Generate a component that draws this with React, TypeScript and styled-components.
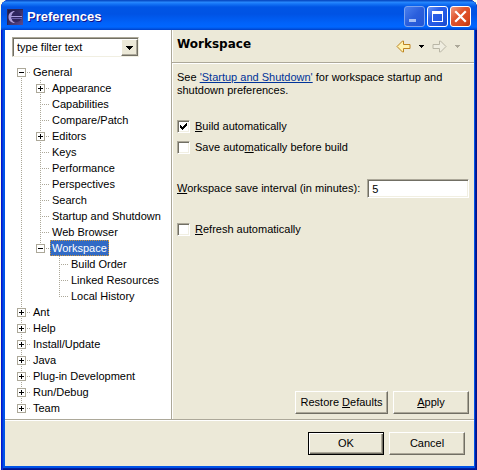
import React, { useState } from "react";
import styled, { createGlobalStyle, css } from "styled-components";

const face = "#ece9d8";
const shade = "#aca899";

const GlobalStyle = createGlobalStyle`
  * { box-sizing: border-box; }
  body { margin: 0; background: #fffde8; }
  body, button, input { font: 11px/13px "Liberation Sans", Tahoma, sans-serif; color: #000; }
`;

const Window = styled.div`
  display: flex;
  flex-direction: column;
  min-height: 100vh;
  padding: 0 3px 4px 4px;
  margin-left: 1px;
  border-radius: 8px 8px 0 0;
  background: #0054e8;
  box-shadow: inset 1px 0 #0019cf, inset 2px 0 #0831d9, inset -1px 0 #00138c, inset -2px 0 #001ea0,
    inset 0 -1px #00138c, inset 0 -2px #001ea0;
`;

const TitleBar = styled.header`
  display: flex;
  align-items: center;
  gap: 4px;
  height: 30px;
  margin: 0 -3px 0 -4px;
  padding: 3px 6px 0 6px;
  border-radius: 8px 8px 0 0;
  background: linear-gradient(
    #0a4fc8 0, #0a4fc8 1px, #2a8bff 2px, #1473f5 4px, #0055e5 7px, #0053e4 14px, #0062fa 23px, #0066ff 27px, #0050dc 29px, #003dc8 30px
  );
`;

const Title = styled.h1`
  flex: 1;
  margin: 0;
  font: bold 13px/16px "Liberation Sans", "Trebuchet MS", sans-serif;
  color: #fff;
  text-shadow: 1px 1px #0f1089;
`;

const Captions = styled.div`
  display: flex;
  gap: 2px;
`;

const CaptionButton = styled.button<{ $kind: "dim" | "blue" | "red" }>`
  width: 21px;
  height: 21px;
  padding: 0;
  border: 1px solid #fff;
  border-radius: 3px;
  background: linear-gradient(135deg, #6a95f5, #2b5fe8 35%, #2257e2 70%, #1a48c8);
  svg { display: block; }
  ${(p) => p.$kind === "dim" && css`
    border-color: #7ba2ee;
    background: linear-gradient(135deg, #4a80ee, #2a5edc 50%, #2456d4);
  `}
  ${(p) => p.$kind === "red" && css`
    background: linear-gradient(135deg, #f09a80, #e0552e 40%, #d9481f 75%, #b8330f);
  `}
`;

const Body = styled.main`
  display: grid;
  grid-template-columns: 166px minmax(0, 1fr);
  flex: 1;
  background: ${face};
`;

const Sidebar = styled.nav`
  padding: 7px 0 3px 7px;
  background: #fff;
`;

const Filter = styled.div`
  display: flex;
  width: 127px;
  height: 20px;
  margin-bottom: 7px;
  border: 1px solid;
  border-color: ${shade} #f1efe2 #f1efe2 ${shade};
  box-shadow: inset 1px 1px #716f64;
`;

const FilterInput = styled.input`
  flex: 1;
  min-width: 0;
  padding: 1px 4px 0;
  border: 0;
  background: none;
  outline: 0;
`;

const bevel = css`
  border: 1px solid;
  border-color: #fff #716f64 #716f64 #fff;
  box-shadow: inset -1px -1px ${shade};
  background: ${face};
`;

const DropButton = styled.button`
  ${bevel}
  display: grid;
  place-items: center;
  width: 17px;
  margin: 1px 0 0;
  padding: 0;
`;

const Tree = styled.ul`
  margin: 0;
  padding: 0;
  list-style: none;
`;

const Row = styled.div`
  display: flex;
  height: 16px;
`;

const vDots = `repeating-linear-gradient(${shade} 0 1px, transparent 1px 2px)`;
const hDots = `repeating-linear-gradient(90deg, ${shade} 0 1px, transparent 1px 2px)`;

type Rail = "none" | "full" | "up" | "down";
const railBox = {
  none: "0 0 / 0 0",
  full: "9px 0 / 1px 16px",
  up: "9px 0 / 1px 9px",
  down: "9px 8px / 1px 8px",
};

const Guide = styled.span<{ $rail: Rail; $stub?: boolean }>`
  display: grid;
  flex: none;
  align-items: center;
  width: 19px;
  padding-left: 5px;
  background: ${vDots} ${(p) => railBox[p.$rail]} no-repeat
    ${(p) => p.$stub && css`, ${hDots} 9px 8px / 9px 1px no-repeat`};
`;

const Expander = styled.button`
  display: block;
  width: 9px;
  height: 9px;
  padding: 0;
  border: 1px solid ${shade};
  background: #fff;
  svg { display: block; }
`;

const NodeLabel = styled.button<{ $selected: boolean }>`
  padding: 0 2px;
  border: 0;
  background: none;
  line-height: 16px;
  white-space: nowrap;
  ${(p) => p.$selected && css`
    background: #316ac5;
    color: #fff;
    outline: 1px dotted #ce953a;
    outline-offset: -1px;
  `}
`;

const Page = styled.section`
  display: flex;
  flex-direction: column;
  border-left: 1px solid ${shade};
  box-shadow: inset 1px 0 #fff;
`;

const PageHeader = styled.header`
  display: flex;
  align-items: center;
  justify-content: space-between;
  height: 33px;
  padding: 0 14px 5px 5px;
  border-bottom: 1px solid ${shade};
`;

const PageTitle = styled.h2`
  margin: 0;
  font: bold 12px/16px "DejaVu Sans", Verdana, sans-serif;
`;

const History = styled.div`
  display: flex;
  align-items: center;
  gap: 8px;
  padding-top: 5px;
`;

const FlatButton = styled.button`
  display: grid;
  padding: 0;
  border: 0;
  background: none;
`;

const Form = styled.form`
  display: flex;
  flex-direction: column;
  flex: 1;
  gap: 8px;
  padding: 7px 5px 5px 5px;
  border-top: 1px solid #fff;
`;

const Intro = styled.p`
  margin: 0 0 15px;
  a { color: #003399; }
`;

const Check = styled.label`
  display: flex;
  align-items: center;
  gap: 5px;
  height: 13px;
`;

const CheckBox = styled.input`
  appearance: none;
  width: 13px;
  height: 13px;
  margin: 0;
  border: 1px solid;
  border-color: ${shade} #fff #fff ${shade};
  background: #fff;
  box-shadow: inset 1px 1px #716f64, inset -1px -1px #f1efe2;
  & + svg {
    width: 7px;
    margin: 0 3px 0 -15px;
    visibility: hidden;
  }
  &:checked + svg { visibility: visible; }
`;

const Interval = styled.div`
  display: flex;
  align-items: center;
  gap: 7px;
  margin: 17px 0;
  label { white-space: nowrap; }
`;

const TextBox = styled.input`
  flex: 1;
  min-width: 0;
  height: 19px;
  padding: 0 4px;
  border: 1px solid;
  border-color: ${shade} #fff #fff ${shade};
  background: #fff;
  box-shadow: inset 1px 1px #716f64, inset -1px -1px #f1efe2;
  outline: 0;
`;

const Actions = styled.div`
  display: flex;
  justify-content: flex-end;
  gap: 5px;
  margin-top: auto;
`;

const PushButton = styled.button<{ $wide?: boolean; $primary?: boolean }>`
  ${bevel}
  width: ${(p) => (p.$wide ? 93 : 76)}px;
  height: 23px;
  padding: 0;
  ${(p) => p.$primary && css`
    border-color: #000;
    box-shadow: inset 1px 1px #fff, inset -1px -1px #716f64, inset -2px -2px ${shade};
  `}
`;

const Footer = styled.footer`
  display: flex;
  justify-content: flex-end;
  gap: 5px;
  padding: 12px 9px 11px;
  border-top: 1px solid ${shade};
  background: ${face};
  box-shadow: inset 0 1px #fff;
`;

interface TreeNode {
  name: string;
  open?: boolean;
  children?: TreeNode[];
}

const leaf = (name: string): TreeNode => ({ name });
const closed = (name: string): TreeNode => ({ name, children: [] });

const nodes: TreeNode[] = [
  {
    name: "General",
    open: true,
    children: [
      closed("Appearance"),
      leaf("Capabilities"),
      leaf("Compare/Patch"),
      closed("Editors"),
      leaf("Keys"),
      leaf("Performance"),
      leaf("Perspectives"),
      leaf("Search"),
      leaf("Startup and Shutdown"),
      leaf("Web Browser"),
      {
        name: "Workspace",
        open: true,
        children: [leaf("Build Order"), leaf("Linked Resources"), leaf("Local History")],
      },
    ],
  },
  ...["Ant", "Help", "Install/Update", "Java", "Plug-in Development", "Run/Debug", "Team"].map(closed),
];

interface BranchProps {
  items: TreeNode[];
  rails: boolean[];
  selected: string;
  onSelect: (name: string) => void;
}

function Branch({ items, rails, selected, onSelect }: BranchProps) {
  return (
    <Tree>
      {items.map((node, i) => {
        const last = i === items.length - 1;
        const first = i === 0 && rails.length === 0;
        return (
          <li key={node.name}>
            <Row>
              {rails.map((on, d) => <Guide key={d} $rail={on ? "full" : "none"} />)}
              <Guide $rail={first ? "down" : last ? "up" : "full"} $stub>
                {node.children && (
                  <Expander type="button" aria-label={`Toggle ${node.name}`} aria-expanded={!!node.open}>
                    <svg width="7" height="7" viewBox="0 0 7 7" shapeRendering="crispEdges">
                      <path d={node.open ? "M1 3h5v1H1z" : "M1 3h5v1H1zM3 1h1v5H3z"} />
                    </svg>
                  </Expander>
                )}
              </Guide>
              <NodeLabel type="button" $selected={node.name === selected} onClick={() => onSelect(node.name)}>
                {node.name}
              </NodeLabel>
            </Row>
            {node.open && node.children && (
              <Branch items={node.children} rails={[...rails, !last]} selected={selected} onSelect={onSelect} />
            )}
          </li>
        );
      })}
    </Tree>
  );
}

const EclipseLogo = () => (
  <svg width="16" height="16" viewBox="0 0 16 16">
    <defs>
      <linearGradient id="sky" x1="0" y1="0" x2="1" y2="1">
        <stop offset="0" stopColor="#17133f" />
        <stop offset="1" stopColor="#5d4a8c" />
      </linearGradient>
    </defs>
    <rect width="16" height="16" fill="url(#sky)" />
    <path d="M8 2C4 2 1.500 4.500 1.500 8S4 14 8 14C5.500 12.500 4.500 10.500 4.500 8S5.500 3.500 8 2z" fill="#a99bd8" />
    <circle cx="9.500" cy="8" r="5" fill="#30265f" />
    <path d="M4 7.500h11" stroke="#a79bdc" />
    <path d="M4 9.500h11" stroke="#6a5ea6" />
    <path d="M0 .5h16M.5 0v16" stroke="#2b255a" />
  </svg>
);

const Caret = ({ color = "#000", size = 5 }: { color?: string; size?: number }) => (
  <svg width={size} height={Math.ceil(size / 2)} viewBox={`0 0 ${size} ${Math.ceil(size / 2)}`} shapeRendering="crispEdges">
    <path d={size === 7 ? "M0 0h7v1H0zM1 1h5v1H1zM2 2h3v1H2zM3 3h1v1H3z" : "M0 0h5v1H0zM1 1h3v1H1zM2 2h1v1H2z"} fill={color} />
  </svg>
);

const Arrow = ({ forward }: { forward?: boolean }) => (
  <svg width="15" height="13" viewBox="0 0 15 13">
    <path
      d={forward ? "M1 4.500h6.500V1h1L14 6.500 8.500 12h-1V8.500H1z" : "M14 4.500H7.500V1h-1L1 6.500 6.500 12h1V8.500H14z"}
      fill={forward ? "#efede0" : "#fff3b0"}
      stroke={forward ? "#b9b6a6" : "#bd8420"}
    />
  </svg>
);

function CheckField({ checked, children }: { checked?: boolean; children: React.ReactNode }) {
  return (
    <Check>
      <CheckBox type="checkbox" defaultChecked={checked} />
      <svg width="7" height="7" viewBox="0 0 7 7" shapeRendering="crispEdges">
        <path d="M0 2h1v1h1v1h1v-1h1v-1h1v-1h1v-1h1v3h-1v1h-1v1h-1v1h-1v1h-1v-1h-1v-1h-1z" />
      </svg>
      <span>{children}</span>
    </Check>
  );
}

export default function App() {
  const [selected, setSelected] = useState("Workspace");
  return (
    <>
      <GlobalStyle />
      <Window>
        <TitleBar>
          <EclipseLogo />
          <Title>Preferences</Title>
          <Captions>
            <CaptionButton type="button" $kind="dim" aria-label="Minimize">
              <svg width="19" height="19"><path d="M4 12h7v3H4z" fill="#a5bff5" /></svg>
            </CaptionButton>
            <CaptionButton type="button" $kind="blue" aria-label="Maximize">
              <svg width="19" height="19" shapeRendering="crispEdges">
                <path d="M4 4h11v11H4zM5 7v7h9V7z" fill="#fff" fillRule="evenodd" />
              </svg>
            </CaptionButton>
            <CaptionButton type="button" $kind="red" aria-label="Close">
              <svg width="19" height="19"><path d="M5 5l9 9M14 5l-9 9" stroke="#fff" strokeWidth="2.200" strokeLinecap="square" /></svg>
            </CaptionButton>
          </Captions>
        </TitleBar>
        <Body>
          <Sidebar>
            <Filter>
              <FilterInput type="text" aria-label="Filter preferences" defaultValue="type filter text" />
              <DropButton type="button" aria-label="Show recent filters"><Caret size={7} /></DropButton>
            </Filter>
            <Branch items={nodes} rails={[]} selected={selected} onSelect={setSelected} />
          </Sidebar>
          <Page>
            <PageHeader>
              <PageTitle>Workspace</PageTitle>
              <History>
                <FlatButton type="button" aria-label="Back"><Arrow /></FlatButton>
                <FlatButton type="button" aria-label="Back history"><Caret /></FlatButton>
                <FlatButton type="button" aria-label="Forward" disabled><Arrow forward /></FlatButton>
                <FlatButton type="button" aria-label="Forward history" disabled><Caret color={shade} /></FlatButton>
              </History>
            </PageHeader>
            <Form onSubmit={(e) => e.preventDefault()}>
              <Intro>
                See <a href="#startup">'Startup and Shutdown'</a> for workspace startup and shutdown preferences.
              </Intro>
              <CheckField checked><u>B</u>uild automatically</CheckField>
              <CheckField>Save auto<u>m</u>atically before build</CheckField>
              <Interval>
                <label htmlFor="interval"><u>W</u>orkspace save interval (in minutes):</label>
                <TextBox id="interval" type="text" defaultValue="5" />
              </Interval>
              <CheckField><u>R</u>efresh automatically</CheckField>
              <Actions>
                <PushButton type="button" $wide>Restore <u>D</u>efaults</PushButton>
                <PushButton type="button"><u>A</u>pply</PushButton>
              </Actions>
            </Form>
          </Page>
        </Body>
        <Footer>
          <PushButton type="button" $primary>OK</PushButton>
          <PushButton type="button">Cancel</PushButton>
        </Footer>
      </Window>
    </>
  );
}
